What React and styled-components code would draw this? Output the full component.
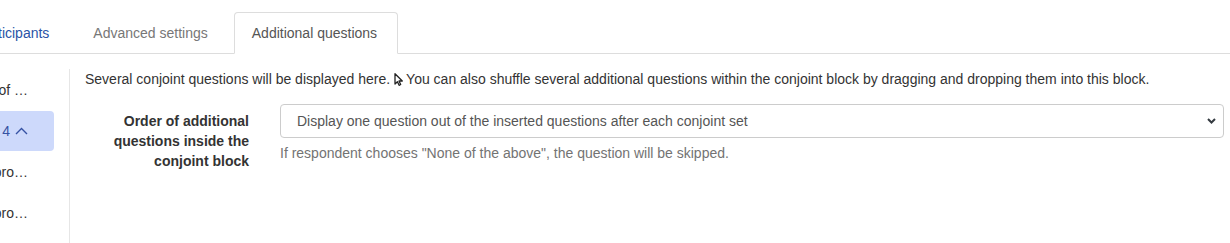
import React from "react";
import styled, { createGlobalStyle } from "styled-components";

const GlobalStyle = createGlobalStyle`
  html, body {
    margin: 0;
    padding: 0;
    background: #ffffff;
    overflow: hidden;
  }
  body {
    font-family: "Liberation Sans", Arial, sans-serif;
    font-size: 14px;
    line-height: 20px;
    color: #333333;
  }
  * { box-sizing: border-box; }
`;

const Page = styled.div`
  width: 1230px;
  height: 243px;
  display: flex;
  flex-direction: column;
`;

const TabBar = styled.nav`
  display: flex;
  align-items: flex-end;
  gap: 8px;
  padding-top: 12px;
  margin-left: -2px;
  border-bottom: 1px solid #dddddd;
`;

const Tab = styled.a`
  display: block;
  padding: 10px ${(p) => (p.$active ? "20px" : "17px")} 10px ${(p) => (p.$first ? "0" : "17px")};
  line-height: 20px;
  font-size: 14px;
  white-space: nowrap;
  border: 1px solid transparent;
  border-left-width: ${(p) => (p.$first ? "0" : "1px")};
  border-radius: 4px 4px 0 0;
  margin-bottom: -1px;
  color: ${(p) => (p.$active ? "#555555" : p.$link ? "#2a53a6" : "#777777")};
  background: ${(p) => (p.$active ? "#ffffff" : "transparent")};
  border-color: ${(p) => (p.$active ? "#dddddd #dddddd transparent" : "transparent")};
  text-decoration: none;
`;

const Body = styled.div`
  flex: 1;
  display: flex;
  margin-top: 15px;
  min-height: 0;
`;

const Sidebar = styled.aside`
  width: 70px;
  flex-shrink: 0;
  padding: 1px 15px 0 0;
  border-right: 1px solid #e6e6e6;
  display: flex;
  flex-direction: column;
  gap: 1px;
`;

const SideItem = styled.div`
  height: 40px;
  display: flex;
  align-items: center;
  justify-content: flex-end;
  gap: 5px;
  padding-right: 26px;
  white-space: nowrap;
  font-size: 14px;
  border-radius: 0 4px 4px 0;
  background: ${(p) => (p.$active ? "#cdd9fb" : "transparent")};
  color: ${(p) => (p.$active ? "#3552a3" : "#333333")};
`;

const Content = styled.main`
  flex: 1;
  padding: 0 6px 0 15px;
`;

const Intro = styled.p`
  margin: 0;
  line-height: 20px;
  font-size: 14px;
  color: #333333;
  white-space: nowrap;
`;

const CursorMark = styled.svg`
  display: inline-block;
  vertical-align: -2px;
  margin: 0 3px 0 4px;
`;

const FormRow = styled.div`
  display: flex;
  gap: 31px;
  margin-top: 15px;
`;

const FieldLabel = styled.label`
  width: 164px;
  flex-shrink: 0;
  padding-top: 7px;
  text-align: right;
  font-weight: bold;
  font-size: 14px;
  line-height: 20px;
  color: #333333;
`;

const Field = styled.div`
  flex: 1;
`;

const SelectBox = styled.div`
  height: 34px;
  display: flex;
  align-items: center;
  justify-content: space-between;
  padding: 0 7px 0 16px;
  border: 1px solid #cccccc;
  border-radius: 4px;
  background: #ffffff;
  font-size: 14px;
  color: #555555;
`;

const Help = styled.p`
  margin: 5px 0 0;
  font-size: 14px;
  line-height: 20px;
  color: #737373;
`;

const Cursor = () => (
  <CursorMark width="9" height="13" viewBox="0 0 9 13" aria-hidden="true">
    <path
      d="M1 0.8 L1 11 L3.4 8.7 L5.1 12.3 L6.7 11.5 L5 8 L8.3 8 Z"
      fill="#ffffff"
      stroke="#222222"
      strokeWidth="1.3"
      strokeLinejoin="round"
    />
  </CursorMark>
);

const ChevronUp = () => (
  <svg width="13" height="8" viewBox="0 0 13 8" aria-hidden="true">
    <path d="M1 7 L6.5 1.5 L12 7" fill="none" stroke="#3552a3" strokeWidth="1.4" />
  </svg>
);

const ChevronDown = () => (
  <svg width="9" height="6" viewBox="0 0 9 6" aria-hidden="true">
    <path d="M1 1 L4.5 4.5 L8 1" fill="none" stroke="#343a40" strokeWidth="2" />
  </svg>
);

export default function App() {
  return (
    <>
      <GlobalStyle />
      <Page>
        <TabBar>
          <Tab $first $link>ticipants</Tab>
          <Tab>Advanced settings</Tab>
          <Tab $active>Additional questions</Tab>
        </TabBar>
        <Body>
          <Sidebar>
            <SideItem>of …</SideItem>
            <SideItem $active>
              4
              <ChevronUp />
            </SideItem>
            <SideItem>pro…</SideItem>
            <SideItem>pro…</SideItem>
          </Sidebar>
          <Content>
            <Intro>
              Several conjoint questions will be displayed here.
              <Cursor />
              You can also shuffle several additional questions within the conjoint block by dragging and dropping them into this block.
            </Intro>
            <FormRow>
              <FieldLabel>Order of additional questions inside the conjoint block</FieldLabel>
              <Field>
                <SelectBox role="combobox">
                  <span>Display one question out of the inserted questions after each conjoint set</span>
                  <ChevronDown />
                </SelectBox>
                <Help>If respondent chooses "None of the above", the question will be skipped.</Help>
              </Field>
            </FormRow>
          </Content>
        </Body>
      </Page>
    </>
  );
}
